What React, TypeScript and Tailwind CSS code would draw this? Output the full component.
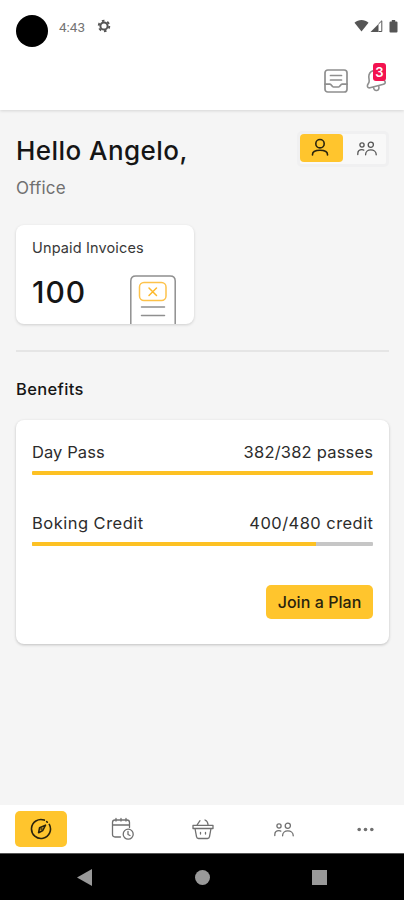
import type { ReactNode } from "react";

function GroupIcon({ className }: { className: string }) {
  return (
    <svg className={className} viewBox="0 0 20 15" fill="none" stroke="currentColor" strokeWidth="1.3" strokeLinecap="round">
      <circle cx="5" cy="4" r="2.1" />
      <circle cx="13.8" cy="3.7" r="2.6" />
      <path d="M.8 13.500v-.8c0-2.300 1.800-4 4.200-4 .7 0 1.300.1 1.800.4M8.600 13.800v-.4c0-2.600 2.200-4.500 5.200-4.500s5.400 1.900 5.400 4.500v.4" />
    </svg>
  );
}

function StatusBar() {
  return (
    <div className="flex h-[53px] items-start pl-4 pr-[6px] text-[#555]">
      <span className="mt-[15px] size-8 rounded-full bg-black" />
      <span className="ml-[11px] mt-[18px] w-[28px] whitespace-nowrap font-['Roboto'] text-[13.500px] leading-[18px] text-[#747474]">4:43</span>
      <svg className="ml-[10px] mt-[19px] size-[14px]" viewBox="0 0 14 14" fill="none" stroke="currentColor">
        <circle cx="7" cy="7" r="3.600" strokeWidth="2" />
        <circle cx="7" cy="7" r="5.300" strokeWidth="1.900" strokeDasharray="2.600 2.950" />
      </svg>
      <svg className="ml-auto mt-[19px] h-[13px] w-[15px]" viewBox="0 0 15 13" fill="currentColor">
        <path d="M.5 3.700C4.600.2 10.400.2 14.500 3.700L7.500 12.500Z" />
      </svg>
      <svg className="ml-[1px] mt-[20px] h-[13px] w-[13px]" viewBox="0 0 13 13" fill="currentColor">
        <path d="M.5 12 8.500 4v8Z" />
        <path d="M8.500 4 11.800.8V11.500H8.500" fill="none" stroke="currentColor" />
      </svg>
      <svg className="ml-[6px] mt-[20px] h-[13px] w-[9px]" viewBox="0 0 9 13" fill="currentColor">
        <path d="M2.800 0h3.400v1.500h1.300q1 0 1 1v9q0 1-1 1h-6q-1 0-1-1v-9q0-1 1-1h1.300Z" />
      </svg>
    </div>
  );
}

function Header() {
  return (
    <header className="flex h-[57px] items-start justify-end pr-[15px] pt-[10px] text-[#8f8f8f]">
      <svg className="mt-[5px] size-[26px]" viewBox="0 0 26 26" fill="none" stroke="currentColor" strokeWidth="1.700" strokeLinecap="round" strokeLinejoin="round">
        <rect x="2" y="2" width="22" height="22" rx="2.800" />
        <path d="M7.500 7.500h11M7.500 12h11M2 16.200h5c1.500 0 1.800 2.800 3.400 2.800h5.200c1.600 0 1.900-2.800 3.400-2.800h5" />
      </svg>
      <div className="relative ml-[16px] h-[32px] w-[24px]">
        <svg className="h-[32px] w-[24px]" viewBox="0 0 24 32" fill="none" stroke="currentColor" strokeWidth="1.600" strokeLinecap="round" strokeLinejoin="round">
          <path d="M8 7.800C5.300 8.800 3.800 11 3.800 13.800c0 2 .8 3.700.2 5.500-.5 1.500-1.800 2.200-1.600 3.900.2 1.400 1.200 1.900 2.600 1.600l13.500-3.600c1.500-.4 2-1.300 1.600-2.600-.3-.7-.8-1-1.200-1.600M8.500 24.500c.3 2 1.500 3.200 3.300 3 1.800-.3 2.500-2 2-4.400" />
        </svg>
        <span className="absolute left-[8px] top-0 flex h-[18px] w-[13px] items-center justify-center rounded-[3px] bg-[#f31350] font-['Inter'] text-[13px] font-semibold leading-none text-white">3</span>
      </div>
    </header>
  );
}

function Benefit({ name, amount, nameClass, amountClass, fill }: { name: string; amount: string; nameClass: string; amountClass: string; fill: number }) {
  return (
    <div className="h-[71px]">
      <div className="flex h-[18px] items-center justify-between whitespace-nowrap text-[16.500px] leading-[18px] text-[#2c2c2c]">
        <span className={nameClass}>{name}</span>
        <span className={amountClass}>{amount}</span>
      </div>
      <div className="mt-[10px] h-1 overflow-hidden rounded-[1px] bg-[#c6c6c6]">
        <div className="h-full bg-[#fdc123]" style={{ width: `${fill}%` }} />
      </div>
    </div>
  );
}

function InvoiceArt() {
  return (
    <svg className="h-[49px] w-[46px]" viewBox="0 0 46 49" fill="none" strokeLinecap="round">
      <path d="M.8 50V6q0-5 5-5h34.400q5 0 5 5v44" stroke="#8f8f8f" strokeWidth="1.500" />
      <rect x="9.500" y="7.500" width="26.500" height="18" rx="4.500" stroke="#fdc24a" strokeWidth="1.500" />
      <path d="m19 13 7.500 7.500M26.500 13 19 20.500" stroke="#fdb92b" strokeWidth="1.500" />
      <path d="M11.500 32h23M11.500 40.500h23" stroke="#8f8f8f" strokeWidth="1.500" />
    </svg>
  );
}

function Tab({ children }: { children: ReactNode }) {
  return <button className="flex h-[36px] w-[52px] items-center justify-center">{children}</button>;
}

export default function App() {
  return (
    <div className="flex h-[900px] w-[404px] flex-col overflow-hidden bg-[#f5f5f5] font-['Inter','Liberation_Sans',sans-serif] text-[#151515]">
      <div className="z-10 bg-white shadow-[0_1px_3px_rgba(0,0,0,0.13)]">
        <StatusBar />
        <Header />
      </div>

      <main className="flex h-[695px] flex-col pl-4 pr-[15px] pt-5">
        <div className="flex h-[95px] items-start justify-between">
          <div className="pt-[1px]">
            <h1 className="h-[40px] whitespace-nowrap text-[26px] font-medium leading-[40px] tracking-[0.45px]">Hello Angelo,</h1>
            <p className="mt-[7px] text-[17px] leading-[20px] tracking-[0.2px] text-[#707070]">Office</p>
          </div>
          <div className="mt-[1px] flex h-[36px] w-[92px] rounded-[5px] border-[3px] border-[#f0f0f1] bg-[#f8f8f8]">
            <button className="flex h-[28px] w-[43px] items-center justify-center rounded-[4px] bg-[#ffc52d] text-[#2b240d]">
              <svg className="-ml-1 h-[20px] w-[18px]" viewBox="0 0 18 20" fill="none" stroke="currentColor" strokeWidth="1.600" strokeLinecap="round">
                <circle cx="9" cy="5.700" r="4.200" />
                <path d="M1.500 17v-.5c0-2.700 3-4.300 7.500-4.300s7.500 1.600 7.500 4.300v.5" />
              </svg>
            </button>
            <button className="flex h-[28px] w-[43px] items-center justify-center text-[#555]">
              <GroupIcon className="ml-1 h-[15px] w-[20px]" />
            </button>
          </div>
        </div>

        <section className="flex h-[99px] w-[178px] shrink-0 justify-between overflow-hidden rounded-[8px] bg-white pl-4 pr-[18px] shadow-[0_1px_3px_rgba(0,0,0,0.16)]">
          <div className="pt-[13px]">
            <h2 className="w-0 whitespace-nowrap text-[14.500px] leading-[20px] tracking-[0.14px] text-[#383838]">Unpaid Invoices</h2>
            <p className="mt-[15px] text-[30px] font-medium leading-[38px] tracking-[1px]">100</p>
          </div>
          <div className="mt-[50px]"><InvoiceArt /></div>
        </section>

        <div className="mt-[26px] h-[2px] shrink-0 bg-[#e5e5e5]" />
        <h2 className="mt-[25px] h-[24px] shrink-0 text-[16.500px] font-medium leading-[24px] tracking-[0.34px]">Benefits</h2>

        <section className="mt-[19px] flex h-[224px] shrink-0 flex-col rounded-[8px] bg-white px-4 pt-[23px] shadow-[0_1px_3px_rgba(0,0,0,0.22)]">
          <Benefit name="Day Pass" amount="382/382 passes" nameClass="tracking-[0.08px]" amountClass="-mr-[0.2px] tracking-[0.2px]" fill={100} />
          <Benefit name="Boking Credit" amount="400/480 credit" nameClass="tracking-[0.48px]" amountClass="-mr-[0.45px] tracking-[0.45px]" fill={83.3} />
          <button className="h-[34px] w-[107px] self-end whitespace-nowrap rounded-[5px] bg-[#ffc52d] text-[16px] font-medium leading-[34px] tracking-[0.05px] text-[#29230d]">Join a Plan</button>
        </section>
      </main>

      <nav className="flex h-[48px] items-center justify-between bg-white pl-[15px] pr-[13px] text-[#707070]">
        <button className="flex h-[36px] w-[52px] items-center justify-center rounded-[5px] bg-[#ffc52d] text-[#2b240d]">
          <svg className="size-[22px]" viewBox="0 0 22 22" fill="none" stroke="currentColor" strokeWidth="1.600" strokeLinecap="round" strokeLinejoin="round">
            <path d="M14.300 2.100a9.500 9.500 0 1 0 5 4.300M17.300 4.200l-.6-.6" />
            <path d="m15.500 7.200-2.700 5.300-4.200 2.200 1-5Z" />
            <path d="M11 11h1" />
          </svg>
        </button>
        <Tab>
          <svg className="ml-[1px] size-[24px]" viewBox="0 0 24 24" fill="none" stroke="currentColor" strokeWidth="1.300" strokeLinecap="round" strokeLinejoin="round">
            <path d="M9.500 20H4q-2.500 0-2.500-2.500V5.500Q1.500 3 4 3h12q2.500 0 2.500 2.500v5M1.500 8h17M5 1.500V4M10 1.500V4M15 1.500V4" />
            <circle cx="17.200" cy="17.200" r="5" />
            <path d="M17 14.500v3l2 1" />
          </svg>
        </Tab>
        <Tab>
          <svg className="size-[22px]" viewBox="0 0 22 22" fill="none" stroke="currentColor" strokeWidth="1.300" strokeLinecap="round" strokeLinejoin="round">
            <path d="M1 7.300h20v3.200H1ZM3 10.500l1.500 8.200q.3 1.800 2 1.800h9q1.700 0 2-1.800l1.500-8.200M5 7l3-4.300M16 6.500q-.2-3.200-3-4.500M8.500 14.500v1.500M13.500 14.500v1.500" />
          </svg>
        </Tab>
        <Tab><GroupIcon className="h-[15px] w-[20px]" /></Tab>
        <Tab>
          <svg className="h-[5px] w-[17px]" viewBox="0 0 17 5" fill="currentColor">
            <circle cx="2.200" cy="2.500" r="1.800" /><circle cx="8.500" cy="2.500" r="1.800" /><circle cx="14.800" cy="2.500" r="1.800" />
          </svg>
        </Tab>
      </nav>

      <div className="flex h-[47px] items-center border-t border-[#555] bg-black pl-[77px] text-[#999]">
        <svg className="h-[17px] w-[15px]" viewBox="0 0 15 17" fill="currentColor"><path d="M15 0v17L0 8.500Z" /></svg>
        <span className="ml-[103px] size-[15px] rounded-full bg-[#999]" />
        <span className="ml-[102px] size-[15px] bg-[#999]" />
      </div>
    </div>
  );
}
